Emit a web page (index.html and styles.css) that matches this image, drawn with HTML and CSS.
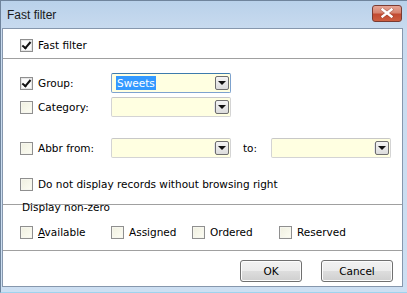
FILE: index.html
```html
<!DOCTYPE html>
<html>
<head>
<meta charset="utf-8">
<link rel="stylesheet" href="styles.css">
</head>
<body>
<div class="window">
  <div class="titlebar">
    <span class="title">Fast filter</span>
    <span class="close">
      <svg width="14" height="10" viewBox="0 0 14 10"><path d="M2.5 1.5 L11.5 8.5 M11.5 1.5 L2.5 8.5" stroke="#6b2b22" stroke-width="3.6" stroke-linecap="square" opacity="0.35"/><path d="M2.5 1.5 L11.5 8.5 M11.5 1.5 L2.5 8.5" stroke="#ffffff" stroke-width="2.4" stroke-linecap="square"/></svg>
    </span>
  </div>
  <div class="client">
    <div class="row r-fast">
      <span class="cb checked"></span><span class="lbl">Fast filter</span>
    </div>
    <div class="sep"></div>
    <div class="row r-group">
      <span class="cb checked"></span><span class="lbl w73">Group:</span>
      <div class="combo focus"><span class="val"><span class="sel">Sweets</span></span><span class="dd"></span></div>
    </div>
    <div class="row r-cat">
      <span class="cb"></span><span class="lbl w73">Category:</span>
      <div class="combo"><span class="val"></span><span class="dd divided"></span></div>
    </div>
    <div class="row r-abbr">
      <span class="cb"></span><span class="lbl w73">Abbr from:</span>
      <div class="combo"><span class="val"></span><span class="dd divided"></span></div>
      <span class="lbl to">to:</span>
      <div class="combo"><span class="val"></span><span class="dd divided"></span></div>
    </div>
    <div class="row r-right">
      <span class="cb"></span><span class="lbl">Do not display records without browsing right</span>
    </div>
    <div class="group">
      <span class="gtitle">Display non-zero</span>
    </div>
    <div class="row r-nz">
      <div class="nz w91"><span class="cb"></span><span class="lbl"><u>A</u>vailable</span></div>
      <div class="nz w81"><span class="cb"></span><span class="lbl">Assigned</span></div>
      <div class="nz w87"><span class="cb"></span><span class="lbl">Ordered</span></div>
      <div class="nz"><span class="cb"></span><span class="lbl">Reserved</span></div>
    </div>
    <div class="sep sep2"></div>
    <div class="buttons">
      <button class="btn ok">OK</button>
      <button class="btn cancel">Cancel</button>
    </div>
  </div>
</div>
</body>
</html>
```

FILE: styles.css
```css
* { box-sizing: border-box; }
html, body { margin: 0; padding: 0; }
body {
  width: 407px;
  height: 293px;
  overflow: hidden;
  font-family: "DejaVu Sans", Verdana, sans-serif;
  font-size: 10.5px;
  color: #000;
}
.window {
  width: 407px;
  height: 293px;
  background: linear-gradient(#b9d1ea, #c9dbef 30px, #cddff2);
  border-left: 1px solid #6f849c;
  border-top: 1px solid #6f849c;
  border-bottom: 1px solid #9fd3ee;
  padding: 0 4px 5px 1px;
  display: flex;
  flex-direction: column;
}
.titlebar {
  height: 27px;
  display: flex;
  align-items: center;
  justify-content: space-between;
  padding: 0 1px 0 5px;
}
.title {
  font-family: "Liberation Sans", Arial, sans-serif;
  font-size: 12px;
  color: #1a1a1a;
}
.close {
  width: 30px;
  height: 17px;
  margin-top: -3px;
  border: 1px solid #7a3b32;
  border-radius: 3px;
  background: linear-gradient(#e6a595, #d78470 45%, #c24a31 55%, #cd5e40);
  display: flex;
  align-items: center;
  justify-content: center;
}
.client {
  flex: 1;
  background: #fff;
  border: 1px solid #8697ad;
  display: flex;
  flex-direction: column;
}
.row {
  display: flex;
  align-items: center;
  height: 20px;
  padding-left: 17px;
}
.r-fast { margin-top: 6px; }
.sep {
  height: 1px;
  background: #a0a0a0;
  margin-top: 3px;
}
.r-group { margin-top: 14px; }
.r-cat { margin-top: 4px; }
.r-abbr { margin-top: 21px; }
.r-right { margin-top: 16px; }
.cb {
  width: 13px;
  height: 13px;
  flex: none;
  border: 1px solid #8f8f8f;
  background: linear-gradient(135deg, #efefe0, #fdfdf3);
  box-shadow: inset 0 0 0 1px #f6f6ee;
  position: relative;
}
.cb.checked {
  background: #fbfbfb;
  box-shadow: inset 0 0 0 1px #e6e6e6;
}
.cb.checked::after {
  content: "";
  position: absolute;
  left: 3px;
  top: 0px;
  width: 3px;
  height: 7px;
  border-right: 2px solid #111;
  border-bottom: 2px solid #111;
  transform: rotate(40deg);
}
.lbl {
  margin-left: 5px;
  white-space: nowrap;
}
.w73 { width: 73px; flex: none; }
.combo {
  width: 120px;
  height: 20px;
  flex: none;
  border: 1px solid #d4d4d4;
  border-top-color: #c8c8c8;
  border-radius: 2px;
  background: #ffffe1;
  display: flex;
  align-items: center;
  justify-content: space-between;
}
.combo.focus {
  border-color: #7da2ce;
  border-top-color: #3d7bad;
}
.val {
  padding-left: 4px;
  height: 14px;
  display: flex;
  align-items: center;
}
.sel {
  background: #3399ff;
  color: #fff;
  padding: 0 1px;
  line-height: 14px;
}
.dd {
  width: 14px;
  height: 14px;
  margin-right: 1px;
  border: 1px solid #6e6e6e;
  border-radius: 2px;
  background: linear-gradient(#f4f4f4, #dcdcdc);
  position: relative;
}
.dd.divided { box-shadow: -3px 0 0 -2px #e8e8e8; }
.dd::after {
  content: "";
  position: absolute;
  left: 2px;
  top: 4px;
  border-left: 4px solid transparent;
  border-right: 4px solid transparent;
  border-top: 4px solid #111;
}
.to { width: 28px; margin-left: 12px; }
.group {
  margin-top: 10px;
  height: 10px;
  border-top: 1px solid #a0a0a0;
  position: relative;
}
.gtitle {
  position: absolute;
  left: 19px;
  top: -4px;
  line-height: 12px;
}
.r-nz { margin-top: 8px; }
.nz { display: flex; align-items: center; }
.w91 { width: 91px; }
.w81 { width: 81px; }
.w87 { width: 87px; }
.sep2 { margin-top: 8px; }
.buttons {
  display: flex;
  justify-content: flex-end;
  gap: 19px;
  padding-right: 9px;
  margin-top: 9px;
}
.btn {
  height: 22px;
  font-family: "DejaVu Sans", Verdana, sans-serif;
  font-size: 10.5px;
  color: #000;
  border: 1px solid #707070;
  border-radius: 3px;
  background: linear-gradient(#f2f2f2, #ebebeb 50%, #dddddd 51%, #cfcfcf);
  box-shadow: inset 0 0 0 1px #fcfcfc;
  padding: 0;
}
.ok { width: 62px; }
.cancel { width: 72px; }
```
